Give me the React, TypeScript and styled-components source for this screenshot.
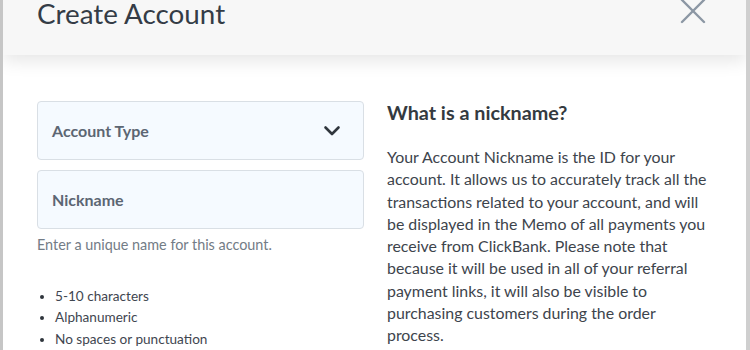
import React from 'react';
import styled, { createGlobalStyle } from 'styled-components';

const GlobalStyle = createGlobalStyle`
  html, body {
    margin: 0;
    padding: 0;
    background: #ffffff;
  }
  body {
    font-family: Lato, "Noto Sans", sans-serif;
    color: #333a42;
  }
`;

const Frame = styled.div`
  width: 750px;
  height: 350px;
  box-sizing: border-box;
  border-left: 3px solid #c6c6c6;
  border-right: 4px solid #cfcfcf;
  overflow: hidden;
  background: #ffffff;
`;

const Header = styled.header`
  height: 55px;
  box-sizing: border-box;
  display: flex;
  align-items: flex-start;
  justify-content: space-between;
  padding: 0 40px 0 34px;
  background: #f7f7f7;
  box-shadow: 0 6px 18px rgba(0, 0, 0, 0.1);
  position: relative;
`;

const Title = styled.h1`
  margin: 0;
  font-size: 27.8px;
  line-height: 28px;
  font-weight: 400;
  color: #343c46;
`;

const CloseButton = styled.button`
  margin-top: -1px;
  padding: 0;
  border: 0;
  background: transparent;
  color: #8c97a4;
  display: flex;
`;

const Body = styled.main`
  display: grid;
  grid-template-columns: 327px 327px;
  column-gap: 23px;
  padding: 46px 0 0 34px;
`;

const FormColumn = styled.section`
  display: flex;
  flex-direction: column;
`;

const Field = styled.div<{ $gap?: number }>`
  height: 59px;
  box-sizing: border-box;
  display: flex;
  align-items: center;
  justify-content: space-between;
  padding: 0 22px 0 14px;
  margin-bottom: ${p => p.$gap ?? 0}px;
  background: #f5faff;
  border: 1px solid #d9dfe5;
  border-radius: 4px;
`;

const FieldLabel = styled.span`
  font-size: 16px;
  font-weight: 700;
  color: #5c6673;
`;

const Helper = styled.p`
  margin: 7px 0 0;
  font-size: 14.4px;
  color: #737c86;
`;

const Rules = styled.ul`
  margin: 33px 0 0;
  padding-left: 18px;
  font-size: 13.6px;
  line-height: 21.4px;
  color: #3f4650;

  li::marker {
    font-size: 13px;
    color: #2f353c;
  }
`;

const InfoColumn = styled.section``;

const InfoTitle = styled.h2`
  margin: 0 0 23px;
  font-size: 19.8px;
  line-height: 22px;
  font-weight: 700;
  color: #343a40;
`;

const InfoText = styled.p`
  margin: 0;
  font-size: 15.9px;
  line-height: 22.3px;
  color: #3d444c;
`;

const Chevron = () => (
  <svg width="18" height="18" viewBox="0 0 18 18" fill="none" stroke="#30363d" strokeWidth="2.6" strokeLinecap="round" strokeLinejoin="round">
    <path d="M2.5 5.5L9 12l6.5-6.5" />
  </svg>
);

const CloseIcon = () => (
  <svg width="26" height="26" viewBox="0 0 26 26" fill="none" stroke="currentColor" strokeWidth="2.4" strokeLinecap="round">
    <path d="M2 1L24 23M24 1L2 23" />
  </svg>
);

export default function App() {
  return (
    <>
      <GlobalStyle />
      <Frame>
        <Header>
          <Title>Create Account</Title>
          <CloseButton aria-label="Close">
            <CloseIcon />
          </CloseButton>
        </Header>
        <Body>
          <FormColumn>
            <Field $gap={10}>
              <FieldLabel>Account Type</FieldLabel>
              <Chevron />
            </Field>
            <Field>
              <FieldLabel>Nickname</FieldLabel>
            </Field>
            <Helper>Enter a unique name for this account.</Helper>
            <Rules>
              <li>5-10 characters</li>
              <li>Alphanumeric</li>
              <li>No spaces or punctuation</li>
            </Rules>
          </FormColumn>
          <InfoColumn>
            <InfoTitle>What is a nickname?</InfoTitle>
            <InfoText>
              Your Account Nickname is the ID for your account. It allows us to accurately track all the
              transactions related to your account, and will be displayed in the Memo of all payments you
              receive from ClickBank. Please note that because it will be used in all of your referral
              payment links, it will also be visible to purchasing customers during the order process.
            </InfoText>
          </InfoColumn>
        </Body>
      </Frame>
    </>
  );
}
